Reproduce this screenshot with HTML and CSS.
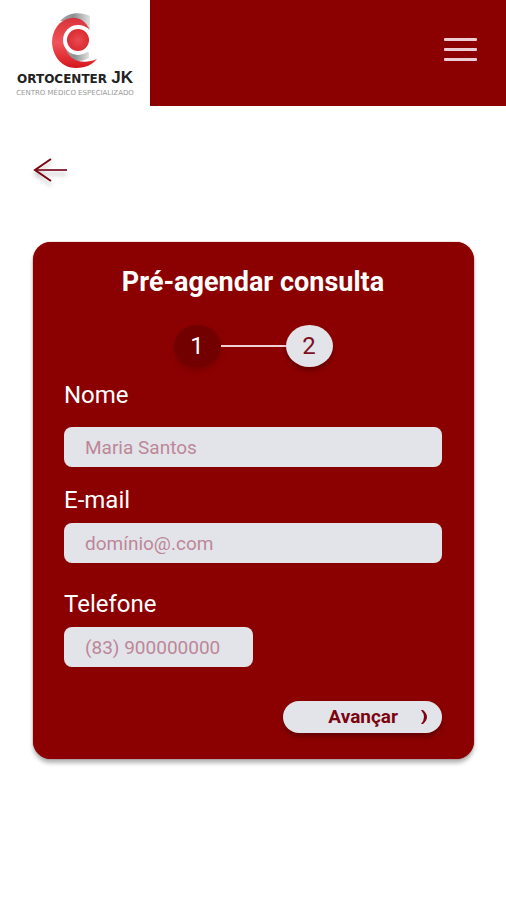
FILE: index.html
```html
<!DOCTYPE html>
<html lang="pt-BR">
<head>
<meta charset="utf-8">
<meta name="viewport" content="width=device-width, initial-scale=1">
<title>Pré-agendar consulta</title>
<link rel="stylesheet" href="styles.css">
</head>
<body>
<header class="topbar">
  <a class="logo" href="#">
    <svg class="logo-mark" viewBox="0 0 48 56" aria-hidden="true">
      <defs>
        <linearGradient id="silver" x1="0" y1="0" x2="1" y2="0">
          <stop offset="0" stop-color="#a8a8a8"/>
          <stop offset="0.45" stop-color="#8c9092"/>
          <stop offset="1" stop-color="#e2e2e2"/>
        </linearGradient>
        <linearGradient id="red" x1="0" y1="0" x2="0" y2="1">
          <stop offset="0" stop-color="#d8323a"/>
          <stop offset="0.5" stop-color="#f0555a"/>
          <stop offset="1" stop-color="#d4151c"/>
        </linearGradient>
        <radialGradient id="ball">
          <stop offset="0" stop-color="#e94a50"/>
          <stop offset="1" stop-color="#dc2a32"/>
        </radialGradient>
      </defs>
      <path fill="url(#silver)" d="M9 9C16 1 28 -1 39 4V17L24 10Z"/>
      <path fill="url(#silver)" d="M12 30H24L38 41V46C30 51 20 50 14 42Z"/>
      <path fill="url(#red)" d="M39 18C34 8 27 5 20 6C8 8 1 18 1 31C2 45 11 56 25 56C35 56 42 52 46 47C37 51 27 51 20 45C15 40 14 35 14 28C16 19 22 14 28 14C32 14 36 15 39 18Z"/>
      <circle cx="27" cy="28" r="15" fill="#fff"/>
      <circle cx="27" cy="28" r="11" fill="url(#ball)"/>
    </svg>
    <span class="logo-name">ORTOCENTER <b class="logo-jk">JK</b></span>
    <span class="logo-tag">CENTRO MÉDICO ESPECIALIZADO</span>
  </a>
  <button class="menu" type="button" aria-label="Menu">
    <span class="menu-line"></span>
    <span class="menu-line"></span>
    <span class="menu-line"></span>
  </button>
</header>
<main class="page">
  <a class="back" href="#" aria-label="Voltar">
    <svg class="back-icon" viewBox="0 0 36 26" aria-hidden="true">
      <path d="M2 13H34" stroke-width="2" stroke="#8a3040"/>
      <path d="M18 2L2 13L18 24" stroke-width="2"/>
    </svg>
  </a>
  <form class="card">
    <h1 class="title">Pré-agendar consulta</h1>
    <ol class="steps">
      <li class="step step-done">1</li>
      <li class="step-line" aria-hidden="true"></li>
      <li class="step step-current">2</li>
    </ol>
    <div class="field field-spaced">
      <label for="nome">Nome</label>
      <input id="nome" type="text" placeholder="Maria Santos">
    </div>
    <div class="field">
      <label for="email">E-mail</label>
      <input id="email" type="text" placeholder="domínio@.com">
    </div>
    <div class="field field-phone">
      <label for="telefone">Telefone</label>
      <input id="telefone" type="tel" placeholder="(83) 900000000">
    </div>
    <button class="next" type="button">
      <span>Avançar</span>
      <svg class="next-icon" viewBox="0 0 8 16" aria-hidden="true"><path d="M1 1H3Q11 8 3 15H1Q7 8 1 1Z"/></svg>
    </button>
  </form>
</main>
</body>
</html>
```
FILE: styles.css
```css
* {
  box-sizing: border-box;
}

body {
  margin: 0;
  background: #fff;
  color: #fff;
  font-family: Roboto, "Liberation Sans", sans-serif;
}

.topbar {
  display: flex;
  align-items: stretch;
  justify-content: space-between;
  background: #8b0000;
}

.logo {
  display: flex;
  flex-direction: column;
  align-items: center;
  width: 150px;
  padding: 12px 0 9px;
  background: #fff;
  color: #222;
  font-family: "DejaVu Sans", sans-serif;
  text-decoration: none;
  white-space: nowrap;
}

.logo-mark {
  width: 48px;
  height: 56px;
}

.logo-name {
  font-size: 12px;
  font-weight: bold;
  line-height: 20px;
}

.logo-jk {
  font-family: "Liberation Sans", sans-serif;
  font-size: 17px;
}

.logo-tag {
  color: #999;
  font-size: 7px;
  line-height: 8px;
}

.menu {
  display: flex;
  flex-direction: column;
  align-self: center;
  gap: 7px;
  margin: 0 29px 8px 0;
  padding: 0;
  border: 0;
  background: none;
}

.menu-line {
  width: 33px;
  height: 3px;
  border-radius: 1px;
  background: #edcdd4;
}

.page {
  padding: 51px 32px 32px 33px;
}

.back {
  display: block;
  width: 36px;
  height: 26px;
}

.back-icon {
  display: block;
  width: 36px;
  height: 26px;
  fill: none;
  stroke: #7c0410;
  filter: drop-shadow(0 4px 2px rgba(0, 0, 0, 0.25));
}

.card {
  display: flex;
  flex-direction: column;
  margin-top: 59px;
  padding: 24px 32px 26px 31px;
  border-radius: 18px;
  background: #8b0000;
  box-shadow: 0 4px 4px rgba(0, 0, 0, 0.3), 0 0 1px #8b0000;
}

.title {
  margin: 0;
  font-size: 27px;
  font-weight: 700;
  line-height: 32px;
  text-align: center;
}

.steps {
  display: flex;
  align-items: center;
  justify-content: center;
  margin: 27px 0 13px;
  padding: 0;
  list-style: none;
}

.step {
  width: 47px;
  height: 42px;
  border-radius: 50%;
  font-size: 24px;
  line-height: 42px;
  text-align: center;
  box-shadow: 0 4px 4px rgba(0, 0, 0, 0.25);
}

.step-done {
  background: #720000;
  box-shadow: 0 4px 4px #7a0000;
}

.step-current {
  background: #e2e4ea;
  color: #7c1020;
}

.step-line {
  width: 65px;
  height: 2px;
  background: #f0d0d4;
}

.field {
  display: flex;
  flex-direction: column;
  gap: 8px;
  margin-bottom: 26px;
}

.field-spaced {
  gap: 17px;
  margin-bottom: 18px;
}

.field label {
  font-size: 24px;
  line-height: 30px;
}

.field input {
  width: 100%;
  height: 40px;
  padding: 0 21px;
  border: 0;
  border-radius: 8px;
  background: #e2e4ea;
  color: #7c1020;
  font: 19px/24px Roboto, "Liberation Sans", sans-serif;
}

.field input::placeholder {
  color: #bd8797;
  opacity: 1;
}

.field-phone {
  margin-bottom: 34px;
}

.field-phone input {
  width: 50%;
}

.next {
  display: flex;
  align-items: center;
  align-self: flex-end;
  justify-content: flex-end;
  gap: 22px;
  width: 159px;
  height: 32px;
  padding: 0 14px;
  border: 0;
  border-radius: 16px;
  background: #e2e4ea;
  color: #7c0410;
  font: 700 19px/24px Roboto, "Liberation Sans", sans-serif;
  box-shadow: 0 4px 4px rgba(0, 0, 0, 0.25);
}

.next-icon {
  width: 8px;
  height: 16px;
  fill: #7c0410;
}
```
